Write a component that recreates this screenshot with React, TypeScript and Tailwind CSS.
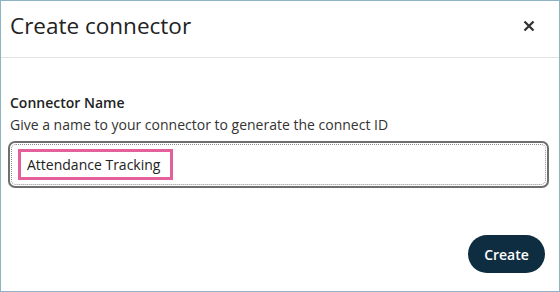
import React from "react";

export default function App() {
  return (
    <div
      className="w-[560px] h-[292px] border border-[#8fb3c2] bg-white flex flex-col text-[#222]"
      style={{ fontFamily: '"Open Sans", "Noto Sans", sans-serif' }}
    >
      <div className="h-[57px] shrink-0 border-b border-[#e2e2e2] flex items-start justify-between pl-[9px] pr-[23px] pt-[10px]">
        <h1 className="text-[22.5px] leading-[30px] font-medium text-[#222]">Create connector</h1>
        <button className="mt-[8px] w-[14px] h-[14px] flex items-center justify-center" aria-label="Close">
          <svg width="12" height="12" viewBox="0 0 12 12">
            <path d="M1.5 1.5 L10.5 10.5 M10.5 1.5 L1.5 10.5" stroke="#333" strokeWidth="2.3" strokeLinecap="butt" />
          </svg>
        </button>
      </div>
      <div className="flex-1 flex flex-col pl-[7px] pt-[35px]">
        <div className="pl-[2px] text-[14px] leading-[20px] font-semibold text-[#222]">Connector Name</div>
        <div className="pl-[2px] mt-[2px] text-[14px] leading-[20px] text-[#333]">
          Give a name to your connector to generate the connect ID
        </div>
        <div className="mt-[6px] w-[541px] h-[47px] border-2 border-[#6f6f6f] rounded-[7px] p-[1px]">
          <div className="h-full border border-dotted border-[#8a8a8a] rounded-[5px] pl-[6px] pt-[4px]">
            <div className="inline-flex items-center h-[31px] w-[155px] border-[3px] border-[#e3609a] pl-[6px] text-[14px] text-[#222]">
              Attendance Tracking
            </div>
          </div>
        </div>
      </div>
      <div className="flex justify-end pr-[14px] pb-[18px]">
        <button className="h-[38px] w-[77px] rounded-full bg-[#0e2d41] text-white text-[14px] font-semibold">
          Create
        </button>
      </div>
    </div>
  );
}
